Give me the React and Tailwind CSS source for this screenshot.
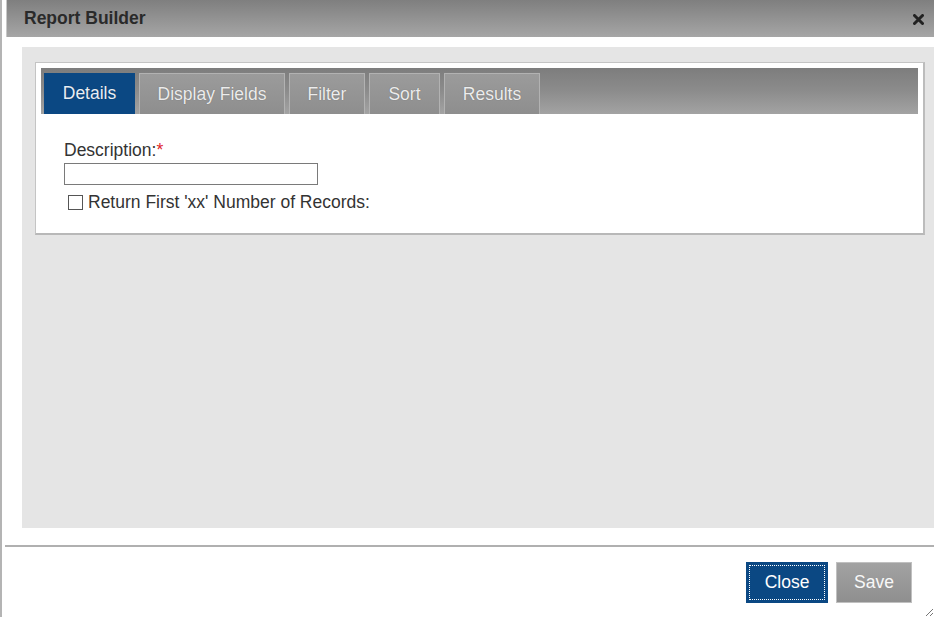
import React, { useState } from "react";

const tabs = [
  { name: "Details", w: "w-[91px]" },
  { name: "Display Fields", w: "w-[146px]" },
  { name: "Filter", w: "w-[76px]" },
  { name: "Sort", w: "w-[71px]" },
  { name: "Results", w: "w-[96px]" },
];

const App = () => {
  const [active, setActive] = useState("Details");
  const [checked, setChecked] = useState(false);

  return (
    <div
      className="relative w-[934px] h-[617px] overflow-hidden bg-white border-l-2 border-[#b4b4b4] text-[#333]"
      style={{ fontFamily: '"Liberation Sans", Arial, sans-serif' }}
    >
      {/* title bar */}
      <div className="ml-[4px] h-[37px] flex items-center justify-between pl-[17px] pr-[10px] bg-gradient-to-b from-[#7f7f7f] to-[#a6a6a6] border-l border-[#c8c8c8]">
        <span className="text-[17.5px] font-bold text-[#2a2a2a]">Report Builder</span>
        <svg width="11" height="11" viewBox="0 0 11 11" className="mt-[1px]">
          <path d="M1.5 1.5 L9.5 9.5 M9.5 1.5 L1.5 9.5" stroke="#222" strokeWidth="3" strokeLinecap="round" />
        </svg>
      </div>

      {/* body */}
      <div className="pt-[10px] pl-[20px]">
        <div className="h-[481px] bg-[#e5e5e5] pt-[15px] pl-[13px] pr-[9px]">
          <div className="bg-white border border-[#c4c4c4] border-b-2 border-r-2 border-b-[#b8b8b8] border-r-[#bcbcbc] p-[5px] pb-[22px]">
            <div className="h-[46px] flex items-end gap-[4px] pl-[3px] bg-gradient-to-b from-[#7d7d7d] via-[#8c8c8c] to-[#a3a3a3]">
              {tabs.map((t) => {
                const on = t.name === active;
                return (
                  <button
                    key={t.name}
                    onClick={() => setActive(t.name)}
                    className={`h-[41px] ${t.w} text-[17.5px] flex items-center justify-center ${
                      on
                        ? "bg-[#0b4883] text-[#e8eef5]"
                        : "bg-gradient-to-b from-[#9b9b9b] to-[#8e8e8e] text-[#ececec] border border-[#b2b2b2] border-b-0"
                    }`}
                    style={{ textShadow: "0 0 1px rgba(0,0,0,0.35)" }}
                  >
                    {t.name}
                  </button>
                );
              })}
            </div>

            <div className="pl-[23px] pt-[27px] text-[17.5px] text-[#333]">
              <div className="leading-[19px]">
                Description:<span className="text-[#e0262b]">*</span>
              </div>
              <input
                type="text"
                className="block mt-[3px] w-[254px] h-[22px] border border-[#7a7a7a] outline-none px-1"
              />
              <label className="flex items-center mt-[8px] leading-[18px] cursor-pointer">
                <span
                  onClick={() => setChecked(!checked)}
                  className="ml-[4px] w-[15px] h-[15px] border border-[#555] bg-white flex items-center justify-center text-[11px]"
                >
                  {checked ? "✓" : ""}
                </span>
                <span className="ml-[5px]">Return First 'xx' Number of Records:</span>
              </label>
            </div>
          </div>
        </div>
      </div>

      {/* footer */}
      <div className="mt-[17px] ml-[3px] border-t-2 border-[#b0b0b0] flex justify-end gap-[8px] pt-[15px] pr-[22px]">
        <button className="h-[41px] w-[82px] bg-[#0b4883] text-white text-[17.5px] outline outline-1 outline-dotted outline-white -outline-offset-[4px]">
          Close
        </button>
        <button className="h-[41px] w-[76px] bg-gradient-to-b from-[#a2a2a2] to-[#8f8f8f] border border-[#c0c0c0] text-[#f8f8f8] text-[17.5px]">
          Save
        </button>
      </div>

      {/* resize grip */}
      <svg width="10" height="10" viewBox="0 0 10 10" className="absolute right-0 bottom-0">
        <path d="M9 2 L2 9 M9 6 L6 9" stroke="#777" strokeWidth="1" />
      </svg>
    </div>
  );
};

export default App;
